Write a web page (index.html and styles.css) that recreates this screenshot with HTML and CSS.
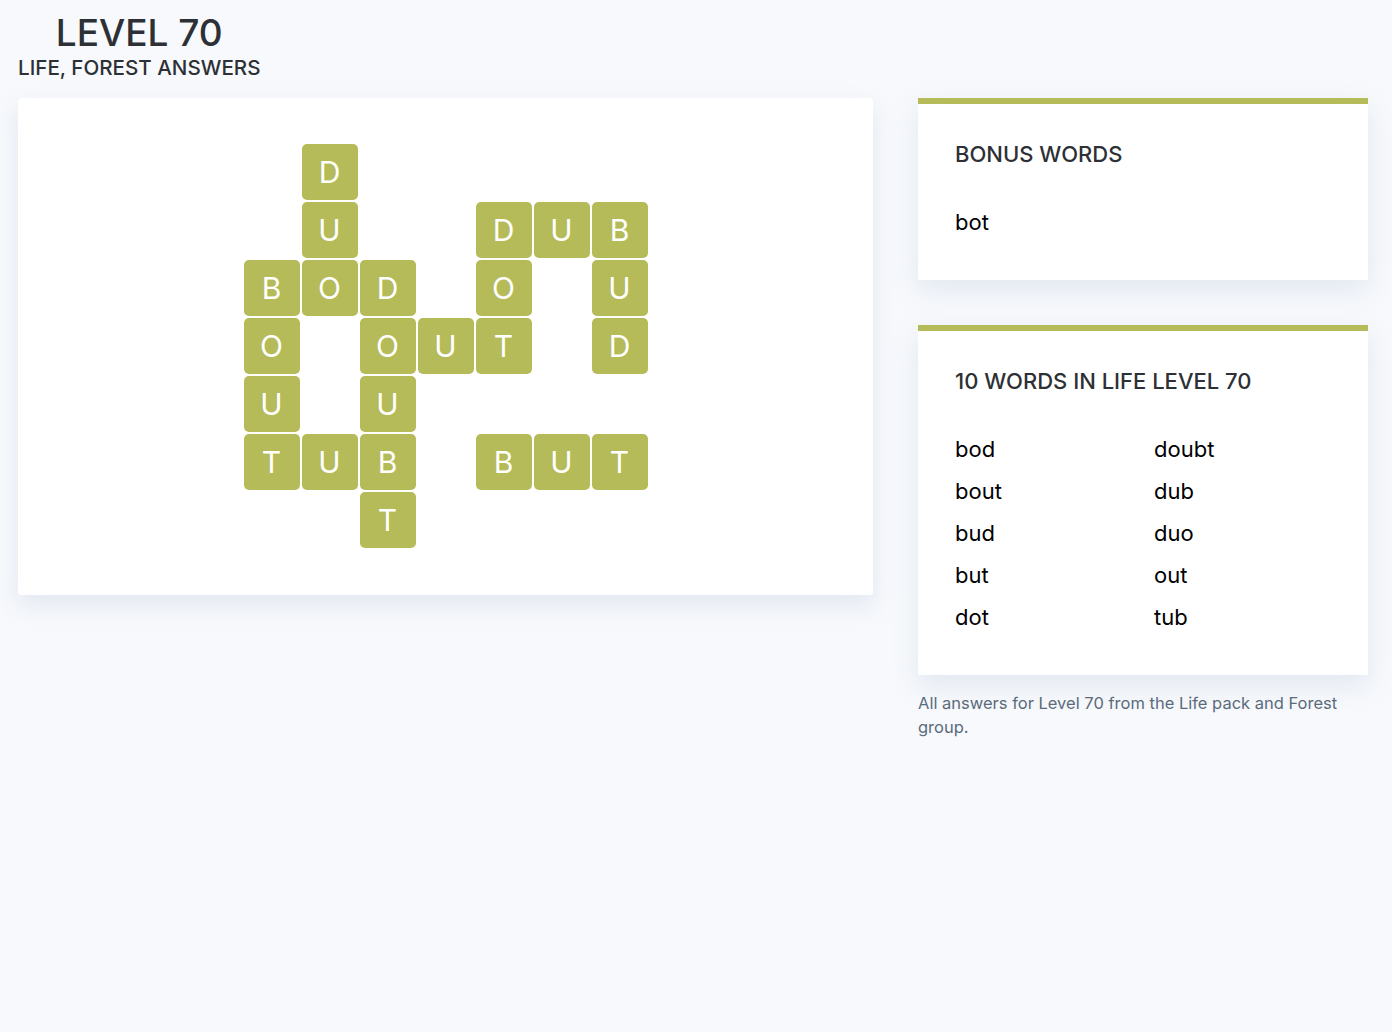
FILE: index.html
```html
<!DOCTYPE html>
<html lang="en">
  <head>
    <meta charset="UTF-8" />
    <meta name="viewport" content="width=device-width, initial-scale=1.0" />
    <title>Level 70 - Life, Forest Answers</title>
    <link rel="stylesheet" href="styles.css">
  </head>
  <body>
    <header class="page-head">
      <h1 class="level-title">LEVEL 70</h1>
      <h2 class="level-sub">LIFE, FOREST ANSWERS</h2>
    </header>
    <main class="layout">
      <section class="board-card">
        <div class="board">
          <!-- row 0 -->
          <span class="cell"></span><span class="tile">D</span><span class="cell"></span><span class="cell"></span><span class="cell"></span><span class="cell"></span><span class="cell"></span>
          <!-- row 1 -->
          <span class="cell"></span><span class="tile">U</span><span class="cell"></span><span class="cell"></span><span class="tile">D</span><span class="tile">U</span><span class="tile">B</span>
          <!-- row 2 -->
          <span class="tile">B</span><span class="tile">O</span><span class="tile">D</span><span class="cell"></span><span class="tile">O</span><span class="cell"></span><span class="tile">U</span>
          <!-- row 3 -->
          <span class="tile">O</span><span class="cell"></span><span class="tile">O</span><span class="tile">U</span><span class="tile">T</span><span class="cell"></span><span class="tile">D</span>
          <!-- row 4 -->
          <span class="tile">U</span><span class="cell"></span><span class="tile">U</span><span class="cell"></span><span class="cell"></span><span class="cell"></span><span class="cell"></span>
          <!-- row 5 -->
          <span class="tile">T</span><span class="tile">U</span><span class="tile">B</span><span class="cell"></span><span class="tile">B</span><span class="tile">U</span><span class="tile">T</span>
          <!-- row 6 -->
          <span class="cell"></span><span class="cell"></span><span class="tile">T</span><span class="cell"></span><span class="cell"></span><span class="cell"></span><span class="cell"></span>
        </div>
      </section>
      <aside class="side">
        <div class="panel">
          <h3 class="panel-title">BONUS WORDS</h3>
          <ul class="words">
            <li>bot</li>
          </ul>
        </div>
        <div class="panel">
          <h3 class="panel-title">10 WORDS IN LIFE LEVEL 70</h3>
          <ul class="words">
            <li>bod</li>
            <li>doubt</li>
            <li>bout</li>
            <li>dub</li>
            <li>bud</li>
            <li>duo</li>
            <li>but</li>
            <li>out</li>
            <li>dot</li>
            <li>tub</li>
          </ul>
        </div>
        <p class="note">All answers for Level 70 from the Life pack and Forest group.</p>
      </aside>
    </main>
  </body>
</html>
```

FILE: styles.css
```css
body {
  margin: 0;
  padding: 0;
  background: #f7f9fc;
  font-family: Inter, "Liberation Sans", sans-serif;
  color: #2d3035;
}
.page-head {
  display: inline-flex;
  flex-direction: column;
  align-items: center;
  padding: 12px 18px 0;
}
.level-title {
  margin: 0;
  font-size: 37px;
  font-weight: 500;
  line-height: 42px;
}
.level-sub {
  margin: 0;
  font-size: 20.6px;
  font-weight: 500;
  line-height: 28px;
}
.layout {
  display: flex;
  align-items: flex-start;
  gap: 45px;
  padding: 16px 18px;
}
.board-card {
  width: 855px;
  box-sizing: border-box;
  padding: 46px 0 47px;
  background: #fff;
  border-radius: 3px;
  box-shadow: 0 10px 25px rgba(180, 192, 214, 0.3);
  display: flex;
  justify-content: center;
}
.board {
  display: grid;
  grid-template-columns: repeat(7, 56px);
  grid-auto-rows: 56px;
  gap: 2px;
}
.tile {
  display: flex;
  align-items: center;
  justify-content: center;
  background: #b5bb58;
  border-radius: 5px;
  color: #fff;
  font-size: 30px;
  font-weight: 400;
}
.side {
  width: 450px;
  display: flex;
  flex-direction: column;
  gap: 45px;
}
.panel {
  background: #fff;
  border-top: 6px solid #b5bb58;
  padding: 36px 37px 44px;
  box-shadow: 0 10px 25px rgba(180, 192, 214, 0.3);
}
.panel-title {
  margin: 0 0 40px;
  font-size: 22px;
  font-weight: 500;
  line-height: 28px;
  color: #2d3035;
}
.words {
  list-style: none;
  margin: 0;
  padding: 0;
  display: grid;
  grid-template-columns: 199px 1fr;
  row-gap: 14px;
  color: #000;
  font-size: 22px;
  line-height: 28px;
}
.note {
  margin: -29px 0 0;
  font-size: 16.5px;
  line-height: 24px;
  color: #5b6b7c;
}
```
